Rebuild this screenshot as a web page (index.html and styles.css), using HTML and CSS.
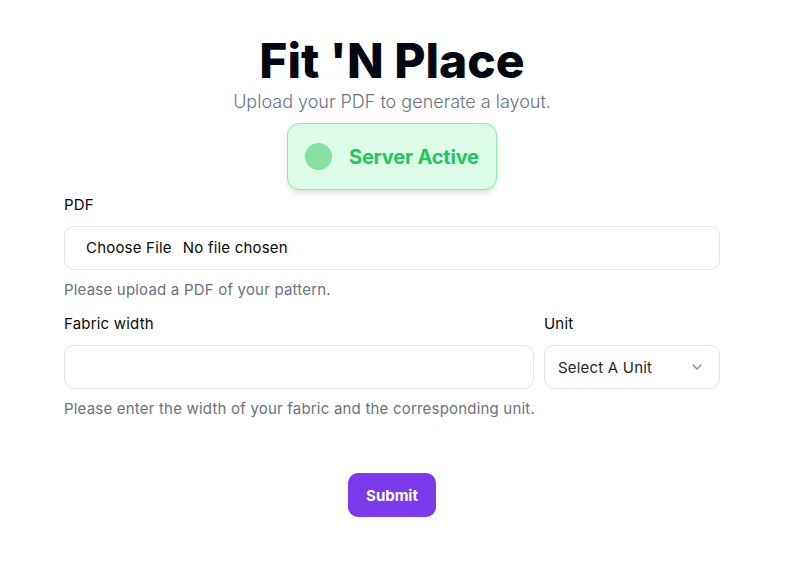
FILE: index.html
```html
<!DOCTYPE html>
<html lang="en">
<head>
<meta charset="utf-8">
<title>Fit 'N Place</title>
<link rel="stylesheet" href="styles.css">
</head>
<body>
<main class="page">
  <header class="hero">
    <h1 class="title">Fit 'N Place</h1>
    <p class="subtitle">Upload your PDF to generate a layout.</p>
    <div class="status">
      <span class="status-dot"></span>
      <span class="status-text">Server Active</span>
    </div>
  </header>
  <form class="form">
    <div class="field">
      <label class="label" for="pdf">PDF</label>
      <input class="input file-input" id="pdf" type="file" accept="application/pdf">
      <p class="help">Please upload a PDF of your pattern.</p>
    </div>
    <div class="field">
      <div class="row">
        <div class="col grow">
          <label class="label" for="width">Fabric width</label>
          <input class="input" id="width" type="text">
        </div>
        <div class="col unit">
          <label class="label">Unit</label>
          <button type="button" class="input select">
            <span>Select A Unit</span>
            <svg class="chev" width="16" height="16" viewBox="0 0 24 24" fill="none" stroke="currentColor" stroke-width="2" stroke-linecap="round" stroke-linejoin="round"><path d="m6 9 6 6 6-6"/></svg>
          </button>
        </div>
      </div>
      <p class="help">Please enter the width of your fabric and the corresponding unit.</p>
    </div>
    <div class="actions">
      <button type="submit" class="submit">Submit</button>
    </div>
  </form>
</main>
</body>
</html>
```
FILE: styles.css
```css
* { box-sizing: border-box; }
html, body { margin: 0; padding: 0; background: #ffffff; }
body {
  font-family: Inter, "Noto Sans", sans-serif;
  color: #09090b;
}
.page {
  width: 656px;
  margin: 0 auto;
  padding-top: 31px;
  transform: translateX(-1px);
}
.hero {
  display: flex;
  flex-direction: column;
  align-items: center;
}
.title {
  margin: 0;
  font-size: 48px;
  line-height: 60px;
  font-weight: 800;
  letter-spacing: 0;
  color: #030712;
}
.subtitle {
  margin: -2px 0 0;
  font-size: 18px;
  line-height: 26px;
  font-weight: 300;
  color: #6b7280;
}
.status {
  margin-top: 8px;
  width: 210px;
  height: 67px;
  display: flex;
  align-items: center;
  gap: 17px;
  padding-left: 17px;
  background: #dcfce7;
  border: 1px solid #86efac;
  border-radius: 12px;
  box-shadow: 0 4px 6px -1px rgba(0,0,0,0.1), 0 2px 4px -2px rgba(0,0,0,0.1);
}
.status-dot {
  width: 27px;
  height: 27px;
  border-radius: 50%;
  background: #86e0a1;
}
.status-text {
  font-size: 20px;
  font-weight: 700;
  color: #22c55e;
  letter-spacing: -0.01em;
}
.form {
  margin-top: 5px;
  display: flex;
  flex-direction: column;
}
.field {
  display: flex;
  flex-direction: column;
  margin-bottom: 14px;
}
.label {
  display: block;
  font-size: 15px;
  line-height: 20px;
  font-weight: 400;
  letter-spacing: 0.2px;
  color: #09090b;
  margin-bottom: 11px;
}
.input {
  width: 100%;
  height: 44px;
  border: 1px solid #e4e4e7;
  border-radius: 10px;
  background: #fff;
  font-family: inherit;
  font-size: 15px;
  letter-spacing: 0.2px;
  color: #09090b;
  padding: 0 12px;
  outline: none;
}
.file-input {
  padding: 0 12px 0 10px;
  line-height: 42px;
}
.file-input::file-selector-button {
  border: 0;
  background: transparent;
  font-family: inherit;
  font-size: 15px;
  letter-spacing: 0.2px;
  font-weight: 400;
  color: #09090b;
  padding: 0;
  margin: 0 11px 0 11px;
  cursor: pointer;
}
.help {
  margin: 10px 0 0;
  font-size: 15px;
  line-height: 20px;
  letter-spacing: 0.2px;
  color: #6b7280;
}
.row {
  display: flex;
  gap: 10px;
}
.col { display: flex; flex-direction: column; }
.grow { flex: 1; }
.unit { width: 176px; }
.select {
  display: flex;
  align-items: center;
  justify-content: space-between;
  padding: 0 14px 0 13px;
  text-align: left;
  color: #27272a;
}
.chev { color: #71717a; opacity: 0.8; }
.actions {
  display: flex;
  justify-content: center;
  margin-top: 40px;
}
.submit {
  width: 88px;
  height: 44px;
  border: 0;
  border-radius: 10px;
  background: #7c3aed;
  color: #fff;
  font-family: inherit;
  font-size: 15px;
  font-weight: 700;
}
```
